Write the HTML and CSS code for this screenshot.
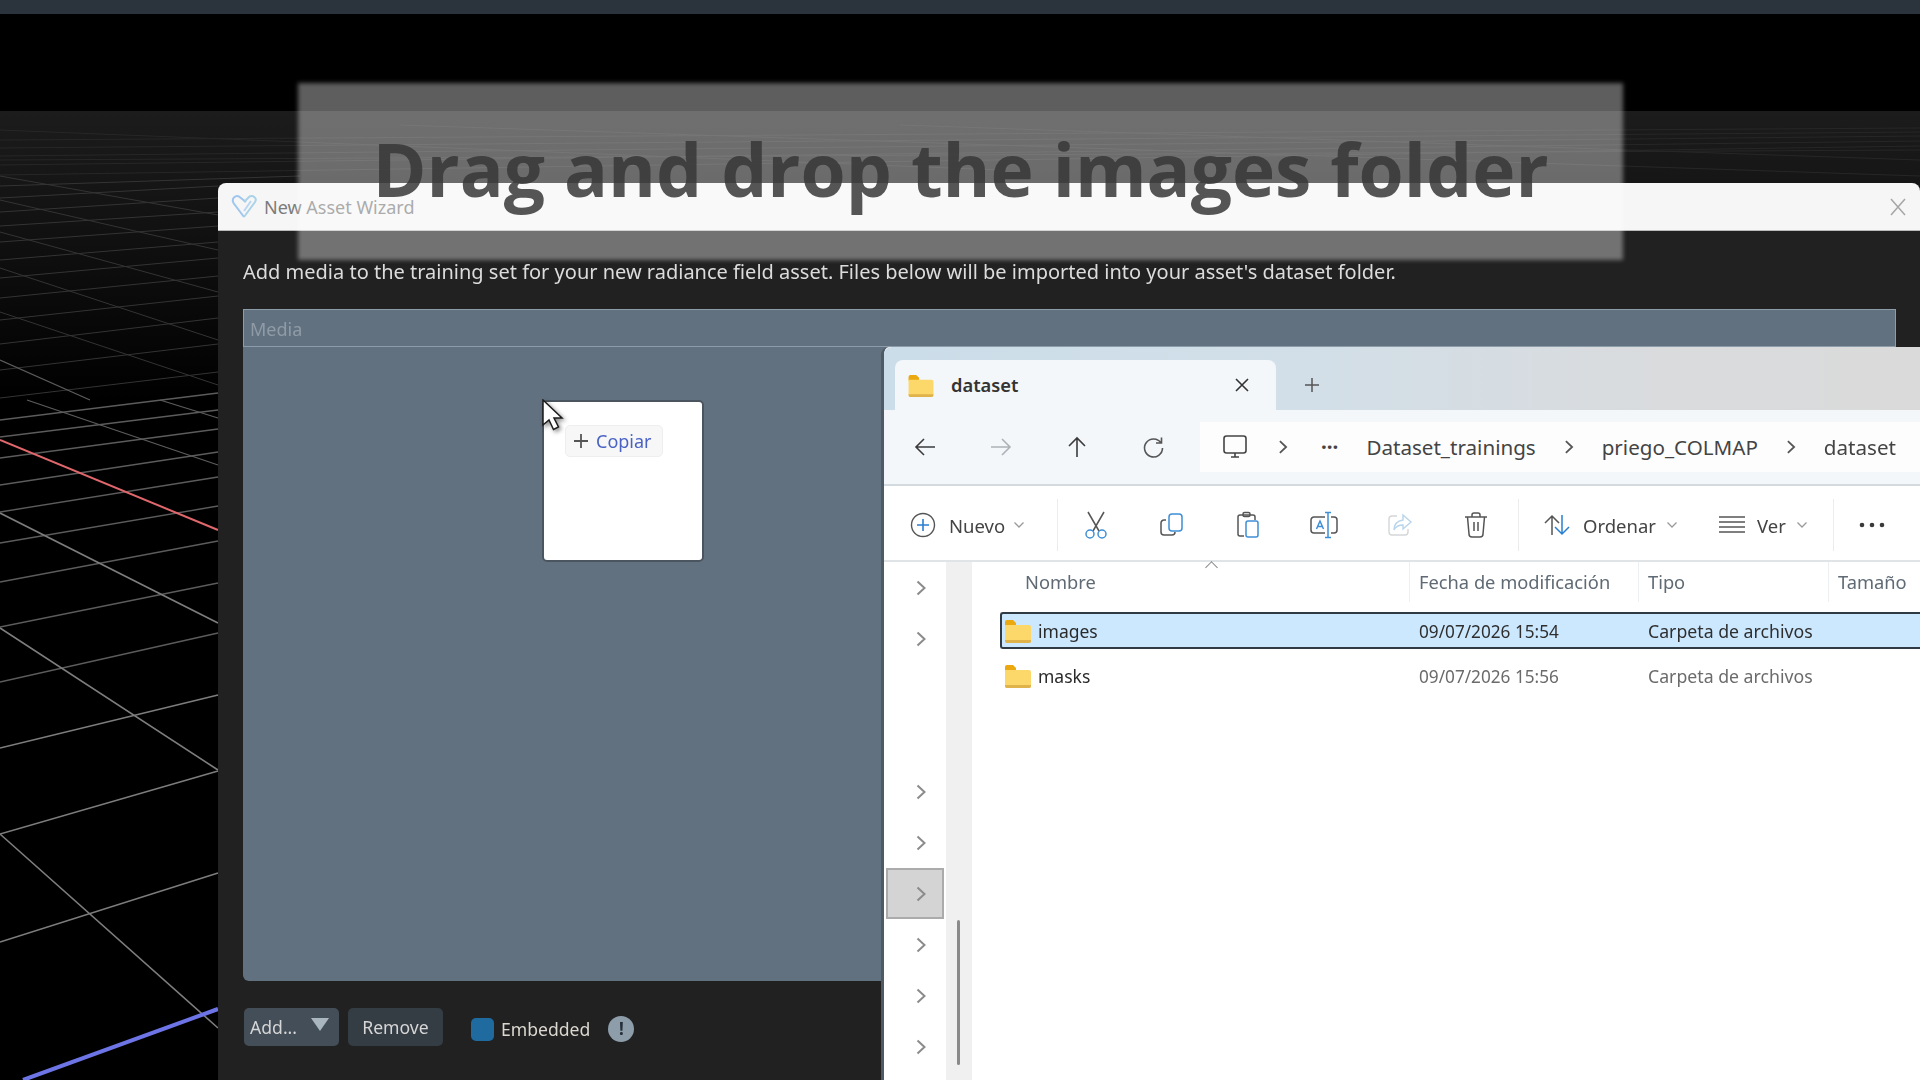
FILE: index.html
```html
<!DOCTYPE html>
<html lang="en">
<head>
  <meta charset="UTF-8">
  <title>New Asset Wizard</title>
  <link rel="stylesheet" href="styles.css">
</head>
<body>

  <svg class="icon-defs" width="0" height="0">
    <symbol id="folder" viewBox="0 0 26 24">
      <path d="M0 3a2 2 0 0 1 2-2h6l3 3v3H0z" fill="#eba80f"/>
      <path d="M0 6h24a2 2 0 0 1 2 2v14a2 2 0 0 1-2 2H2a2 2 0 0 1-2-2z" fill="#fcd76a"/>
      <path d="M0 21h26v1a2 2 0 0 1-2 2H2a2 2 0 0 1-2-2z" fill="#dfb24a"/>
    </symbol>
    <symbol id="chev" viewBox="0 0 12 18">
      <path d="M2.5 2.5 9.5 9l-7 6.5" fill="none" stroke="currentColor" stroke-width="2"/>
    </symbol>
    <symbol id="drop" viewBox="0 0 12 8">
      <path d="M1.5 1.5 6 6l4.500-4.500" fill="none" stroke="currentColor" stroke-width="1.300"/>
    </symbol>
  </svg>

  <div class="topbar"></div>

  <div class="viewport">
    <!-- floor grid -->
    <svg class="grid" width="1920" height="969" viewBox="0 111 1920 969">
      <g class="horizon">
        <path d="M0 140 1920 128M0 148 1920 132M0 156 1920 136M0 165 1920 141M0 175 1920 146"/>
        <path d="M0 160 1920 150M0 130 1000 170M400 125 1920 176M900 125 1920 160"/>
      </g>
      <g class="far">
        <path d="M0 186 300 176M0 198 218 186M0 212 218 198M0 226 218 212M0 242 218 226M0 260 218 242"/>
        <path d="M0 278 218 258M0 298 218 276M0 320 218 296M0 344 218 318M0 370 218 344M0 398 218 372"/>
        <path d="M0 176 218 215M0 200 218 250M0 232 218 292M0 268 218 340M0 312 218 385"/>
      </g>
      <g class="mid">
        <path d="M0 420 218 393M0 437 218 410M0 458 218 429M0 485 218 452M0 512 218 477"/>
        <path d="M0 543 218 506M0 582 218 541M0 627 218 583M0 682 218 633"/>
        <path d="M27 400 218 465M160 400 218 418M0 360 90 400"/>
      </g>
      <g class="near">
        <path d="M0 748 218 695M0 834 218 771M0 942 218 873"/>
        <path d="M0 513 218 623M0 628 218 770M0 834 218 1028"/>
      </g>
      <path class="axis-x" d="M0 440 218 530"/>
      <path class="axis-z" d="M23 1080 218 1009"/>
    </svg>
  </div>

  <section class="wizard">
    <header class="wizard-title">
      <svg class="wizard-logo" width="27" height="24" viewBox="0 0 27 24" fill="none" stroke-width="2">
        <path d="M13 22 2.500 8C0 3 5 0 8 1.500L15 7" stroke="#9fc6ee"/>
        <path d="M13 22 24 7C26.500 3 22 0 18.500 1.500L13 7" stroke="#a9d3e8"/>
        <path d="M13 16 20 6" stroke="#bcd6f2"/>
      </svg>
      <span class="wizard-name">New Asset Wizard</span>
      <svg class="wizard-close" width="18" height="18" viewBox="0 0 18 18"><path d="M2 1 16 17M16 1 2 17" stroke="#a6a6a6" stroke-width="1.500"/></svg>
    </header>
    <p class="wizard-desc">Add media to the training set for your new radiance field asset. Files below will be imported into your asset's dataset folder.</p>
    <div class="media">
      <div class="media-head">Media</div>
    </div>
    <footer class="wizard-foot">
      <div class="btn btn-add">Add...<span class="tri"></span></div>
      <div class="btn btn-remove">Remove</div>
      <span class="check"></span>
      <span class="check-label">Embedded</span>
      <span class="info">!</span>
    </footer>
  </section>

  <div class="drag-card">
    <div class="copy-pill">
      <svg width="16" height="16" viewBox="0 0 16 16"><path d="M8 1v14M1 8h14" stroke="#555" stroke-width="1.800"/></svg>
      <span>Copiar</span>
    </div>
  </div>

  <svg class="cursor" width="24" height="34" viewBox="0 0 24 34">
    <path d="M1 1v25l6-5 4.500 9.500 5-2.500L12 19h8z" fill="#fff" stroke="#1c1c1c" stroke-width="1.500"/>
  </svg>

  <section class="explorer">
    <div class="tabstrip">
      <div class="tab">
        <svg class="tab-folder" width="26" height="23"><use href="#folder"/></svg>
        <span class="tab-name">dataset</span>
        <svg width="16" height="16" viewBox="0 0 16 16"><path d="M2 2l12 12M14 2 2 14" stroke="#333" stroke-width="1.600"/></svg>
      </div>
      <svg class="tab-new" width="18" height="18" viewBox="0 0 18 18"><path d="M9 2v14M2 9h14" stroke="#555" stroke-width="1.500"/></svg>
    </div>

    <div class="navbar">
      <div class="nav-btn">
        <svg width="24" height="24" viewBox="0 0 24 24" fill="none" stroke="#3b3b3b" stroke-width="1.600"><path d="M22 12H3M11 4l-8 8 8 8"/></svg>
      </div>
      <div class="nav-btn">
        <svg width="24" height="24" viewBox="0 0 24 24" fill="none" stroke="#adb2b6" stroke-width="1.600"><path d="M2 12h19M13 4l8 8-8 8"/></svg>
      </div>
      <div class="nav-btn">
        <svg width="24" height="24" viewBox="0 0 24 24" fill="none" stroke="#3b3b3b" stroke-width="1.600"><path d="M12 22V3M4 11l8-8 8 8"/></svg>
      </div>
      <div class="nav-btn">
        <svg width="24" height="24" viewBox="0 0 24 24" fill="none" stroke="#555" stroke-width="1.600"><path d="M20 8a9 9 0 1 0 1.500 5M20.500 2.500V8H15"/></svg>
      </div>
      <div class="address">
        <svg class="addr-pc" width="26" height="26" viewBox="0 0 26 26" fill="none" stroke="#444" stroke-width="1.600"><rect x="2" y="2" width="22" height="17" rx="2.500"/><path d="M9 23h8M13 19v4"/></svg>
        <svg class="addr-chev addr-first" width="12" height="16"><use href="#chev"/></svg>
        <span class="addr-dots">···</span>
        <span class="crumb">Dataset_trainings</span>
        <svg class="addr-chev" width="12" height="16"><use href="#chev"/></svg>
        <span class="crumb">priego_COLMAP</span>
        <svg class="addr-chev" width="12" height="16"><use href="#chev"/></svg>
        <span class="crumb">dataset</span>
      </div>
    </div>

    <div class="toolbar">
      <div class="tb-new">
        <svg width="26" height="26" viewBox="0 0 26 26" fill="none"><circle cx="13" cy="13" r="11.500" stroke="#555" stroke-width="1.400"/><path d="M13 7v12M7 13h12" stroke="#2a7fd0" stroke-width="1.600"/></svg>
        <span>Nuevo</span>
        <svg class="tb-drop" width="12" height="8"><use href="#drop"/></svg>
      </div>
      <div class="tb-sep"></div>
      <div class="tb-btn">
        <svg width="26" height="28" viewBox="0 0 26 28" fill="none" stroke-width="1.500"><path d="M5 1l11 19M21 1 10 20" stroke="#555"/><circle cx="7" cy="23" r="4" stroke="#3f8fd6"/><circle cx="19" cy="23" r="4" stroke="#3f8fd6"/></svg>
      </div>
      <div class="tb-btn">
        <svg width="24" height="24" viewBox="0 0 24 24" fill="none" stroke-width="1.500"><path d="M6 7H4a3 3 0 0 0-3 3v9a3 3 0 0 0 3 3h8a3 3 0 0 0 3-3" stroke="#555"/><rect x="9" y="1" width="13" height="17" rx="3" stroke="#3f8fd6"/></svg>
      </div>
      <div class="tb-btn">
        <svg width="24" height="28" viewBox="0 0 24 28" fill="none" stroke-width="1.500"><path d="M8 25H4a2 2 0 0 1-2-2V6a2 2 0 0 1 2-2h13a2 2 0 0 1 2 2v3" stroke="#555"/><rect x="7" y="1.500" width="7" height="4" rx="1.500" stroke="#555"/><rect x="10" y="10" width="12" height="16" rx="2" stroke="#3f8fd6"/></svg>
      </div>
      <div class="tb-btn">
        <svg width="28" height="28" viewBox="0 0 28 28" fill="none" stroke-width="1.500"><path d="M15 6H4a3 3 0 0 0-3 3v10a3 3 0 0 0 3 3h11M21 6h3a3 3 0 0 1 3 3v10a3 3 0 0 1-3 3h-3" stroke="#555"/><path d="M6.500 18 10 10l3.500 8M7.800 15.500h4.400" stroke="#3f8fd6"/><path d="M18 2v24M15 1.500h6M15 26.500h6" stroke="#3f8fd6"/></svg>
      </div>
      <div class="tb-btn">
        <svg width="26" height="24" viewBox="0 0 26 24" fill="none" stroke-width="1.400"><path d="M10 3H5a3 3 0 0 0-3 3v13a3 3 0 0 0 3 3h13a3 3 0 0 0 3-3v-3" stroke="#d4d6d8"/><path d="M16 2l8 7-8 7v-4c-4 0-7 1-9 5 0-6 3-9 9-10z" stroke="#b9d5ec"/></svg>
      </div>
      <div class="tb-btn">
        <svg width="24" height="26" viewBox="0 0 24 26" fill="none" stroke="#555" stroke-width="1.500"><path d="M1 5h22M8 5V3a2 2 0 0 1 2-2h4a2 2 0 0 1 2 2v2M3.500 5l1.500 17a3 3 0 0 0 3 3h8a3 3 0 0 0 3-3l1.500-17M10 10v9M14 10v9"/></svg>
      </div>
      <div class="tb-sep tb-sep-wide"></div>
      <div class="tb-group tb-sort">
        <svg width="28" height="24" viewBox="0 0 28 24" fill="none" stroke-width="1.500"><path d="M9 22V3M2 10l7-7 7 7" stroke="#555"/><path d="M19 2v19M12 14l7 7 7-7" stroke="#2a7fd0"/></svg>
        <span>Ordenar</span>
        <svg class="tb-drop" width="12" height="8"><use href="#drop"/></svg>
      </div>
      <div class="tb-group tb-view">
        <svg width="26" height="18" viewBox="0 0 26 18" fill="none" stroke="#555" stroke-width="1.300"><path d="M0 1h26M0 6h26M0 11h26M0 16h26"/></svg>
        <span>Ver</span>
        <svg class="tb-drop" width="12" height="8"><use href="#drop"/></svg>
      </div>
      <div class="tb-sep"></div>
      <svg class="tb-more" width="26" height="6" viewBox="0 0 26 6" fill="#3a3a3a"><circle cx="3" cy="3" r="2.300"/><circle cx="13" cy="3" r="2.300"/><circle cx="23" cy="3" r="2.300"/></svg>
    </div>

    <div class="browser">
      <aside class="tree">
        <div class="tree-row"><svg width="12" height="18"><use href="#chev"/></svg></div>
        <div class="tree-row"><svg width="12" height="18"><use href="#chev"/></svg></div>
        <div class="tree-gap"></div>
        <div class="tree-row"><svg width="12" height="18"><use href="#chev"/></svg></div>
        <div class="tree-row"><svg width="12" height="18"><use href="#chev"/></svg></div>
        <div class="tree-row tree-hover"><svg width="12" height="18"><use href="#chev"/></svg></div>
        <div class="tree-row"><svg width="12" height="18"><use href="#chev"/></svg></div>
        <div class="tree-row"><svg width="12" height="18"><use href="#chev"/></svg></div>
        <div class="tree-row"><svg width="12" height="18"><use href="#chev"/></svg></div>
      </aside>
      <div class="tree-scroll"><div class="tree-thumb"></div></div>

      <div class="files">
        <div class="sort-caret"></div>
        <div class="file-cols file-head">
          <div class="col-name">Nombre</div>
          <div>Fecha de modificación</div>
          <div>Tipo</div>
          <div>Tamaño</div>
        </div>
        <div class="file-cols file-row selected">
          <div class="name-cell"><svg width="26" height="24"><use href="#folder"/></svg>images</div>
          <div class="cell-date">09/07/2026 15:54</div>
          <div class="cell-type">Carpeta de archivos</div>
          <div></div>
        </div>
        <div class="file-cols file-row">
          <div class="name-cell"><svg width="26" height="24"><use href="#folder"/></svg>masks</div>
          <div class="cell-date">09/07/2026 15:56</div>
          <div class="cell-type">Carpeta de archivos</div>
          <div></div>
        </div>
      </div>
    </div>
  </section>

  <div class="banner"></div>
  <h1 class="banner-text">Drag and drop the images folder</h1>

</body>
</html>
```

FILE: styles.css
```css
html, body {
  margin: 0;
  width: 1920px;
  height: 1080px;
  overflow: hidden;
  background: #000;
}
body {
  position: relative;
  font-family: "Noto Sans", sans-serif;
}
.icon-defs {
  position: absolute;
}
.topbar {
  height: 14px;
  background: #2b333c;
}
.viewport {
  position: absolute;
  left: 0;
  top: 111px;
  width: 1920px;
  height: 969px;
  background: linear-gradient(#1c1c1c, #141414 90px, #000 290px);
  filter: blur(0.6px);
}
.grid {
  display: block;
  fill: none;
}
.grid .horizon {
  stroke: #272727;
  stroke-width: 1;
}
.grid .far {
  stroke: #343434;
  stroke-width: 1;
}
.grid .mid {
  stroke: #5c5c5c;
  stroke-width: 1.3;
}
.grid .near {
  stroke: #7d7d7d;
  stroke-width: 1.6;
}
.axis-x {
  stroke: #e0686c;
  stroke-width: 2;
}
.axis-z {
  stroke: #6d74e6;
  stroke-width: 4;
}

/* wizard dialog */
.wizard {
  position: absolute;
  left: 218px;
  top: 183px;
  width: 1702px;
  height: 897px;
  display: flex;
  flex-direction: column;
  background: #212121;
  border-radius: 8px 8px 0 0;
  filter: blur(0.6px);
}
.wizard-title {
  height: 47px;
  display: flex;
  align-items: center;
  padding: 0 13px;
  background: #f6f6f6;
  border-bottom: 1px solid #bbb;
  border-radius: 8px 8px 0 0;
}
.wizard-logo {
  margin-right: 6px;
}
.wizard-name {
  flex: 1;
  font-size: 18px;
  color: #7b7b7b;
}
.wizard-desc {
  margin: 0;
  padding: 28px 25px 0;
  height: 50px;
  font-size: 20px;
  line-height: 26px;
  color: #dcdcdc;
  white-space: nowrap;
}
.media {
  height: 672px;
  margin: 0 24px 0 25px;
  background: #627180;
  border-radius: 0 0 6px 6px;
}
.media-head {
  height: 36px;
  padding-left: 6px;
  border: 1px solid #8d9ca9;
  font-size: 18px;
  line-height: 38px;
  color: #8f9ba6;
}
.wizard-foot {
  display: flex;
  align-items: center;
  padding: 27px 25px 0 26px;
  font-size: 17.6px;
  color: #d6d6d6;
}
.btn {
  height: 38px;
  display: flex;
  align-items: center;
  border-radius: 5px;
}
.btn-add {
  width: 95px;
  box-sizing: border-box;
  padding-left: 6px;
  background: #434e58;
}
.tri {
  margin-left: 14px;
  margin-top: -6px;
  border-left: 9px solid transparent;
  border-right: 9px solid transparent;
  border-top: 13px solid #a9b6c0;
}
.btn-remove {
  width: 95px;
  justify-content: center;
  margin-left: 9px;
  background: #343c44;
}
.check {
  width: 23px;
  height: 23px;
  margin: 4px 7px 0 28px;
  border-radius: 5px;
  background: #1f6a9f;
}
.check-label {
  margin-top: 4px;
  color: #dcd8d0;
}
.info {
  width: 26px;
  height: 26px;
  margin: 4px 0 0 18px;
  border-radius: 50%;
  background: #8d9daa;
  color: #26303a;
  font-size: 17px;
  font-weight: 700;
  line-height: 26px;
  text-align: center;
}

/* dragged ghost */
.drag-card {
  position: absolute;
  left: 542px;
  top: 400px;
  width: 158px;
  height: 158px;
  background: #fff;
  border: 2px solid #4a5560;
  border-radius: 5px;
  filter: blur(0.5px);
}
.copy-pill {
  position: absolute;
  left: 21px;
  top: 23px;
  width: 98px;
  height: 32px;
  box-sizing: border-box;
  display: flex;
  align-items: center;
  gap: 7px;
  padding-left: 7px;
  background: #f7f7f7;
  border: 1px solid #eeeeee;
  border-radius: 5px;
  font-size: 18px;
  color: #4a62c4;
}
.cursor {
  position: absolute;
  left: 542px;
  top: 399px;
  filter: drop-shadow(2px 2px 2px rgba(0,0,0,0.45));
}

/* file explorer */
.explorer {
  position: absolute;
  left: 881px;
  top: 347px;
  width: 1039px;
  height: 733px;
  box-sizing: border-box;
  display: flex;
  flex-direction: column;
  background: #fff;
  border-left: 3px solid #4f5a64;
  border-radius: 8px 0 0 0;
  color: #333;
  filter: blur(0.6px);
}
.tabstrip {
  height: 63px;
  flex-shrink: 0;
  display: flex;
  align-items: flex-end;
  padding-left: 11px;
  background: linear-gradient(90deg, #cbdde9, #d2dfe8 40%, #d9dbdd 75%, #dadada);
  border-radius: 8px 0 0 0;
}
.tab {
  width: 381px;
  height: 50px;
  box-sizing: border-box;
  display: flex;
  align-items: center;
  padding: 0 26px 0 13px;
  background: #f3f7fa;
  border-radius: 8px 8px 0 0;
}
.tab-folder {
  margin-right: 17px;
}
.tab-name {
  flex: 1;
  margin-top: -2px;
  font-size: 18.3px;
  font-weight: 600;
  color: #333;
}
.tab-new {
  align-self: center;
  margin: 13px 0 0 27px;
}
.navbar {
  height: 76px;
  flex-shrink: 0;
  box-sizing: border-box;
  display: flex;
  align-items: center;
  padding-left: 3px;
  background: #f3f7fa;
  border-bottom: 2px solid #d3dbe1;
}
.nav-btn {
  width: 76px;
  display: flex;
  justify-content: center;
}
.address {
  flex: 1;
  height: 50px;
  display: flex;
  align-items: center;
  margin-left: 9px;
  padding-left: 22px;
  background: #fdfdfe;
  font-size: 20.6px;
  color: #444;
  white-space: nowrap;
}
.addr-chev {
  margin: 0 27px;
  color: #555;
}
.addr-first {
  margin: 0 32px 0 29px;
}
.addr-dots {
  margin-right: 28px;
  font-weight: 700;
  line-height: 1;
}
.toolbar {
  height: 76px;
  flex-shrink: 0;
  box-sizing: border-box;
  display: flex;
  align-items: center;
  padding-top: 4px;
  background: #fff;
  border-bottom: 2px solid #e1e4e6;
  font-size: 18.5px;
  color: #444;
}
.tb-new {
  width: 173px;
  flex-shrink: 0;
  box-sizing: border-box;
  display: flex;
  align-items: center;
  padding-left: 26px;
}
.tb-new span {
  margin: 0 8px 0 13px;
}
.tb-drop {
  color: #9a9a9a;
}
.tb-sep {
  width: 1px;
  height: 52px;
  background: #ececec;
}
.tb-sep-wide {
  margin-left: 4px;
}
.tb-btn {
  width: 76px;
  display: flex;
  justify-content: center;
}
.tb-group {
  display: flex;
  align-items: center;
}
.tb-group span {
  margin: 0 10px 0 12px;
}
.tb-sort {
  padding-left: 24px;
  width: 177px;
  box-sizing: border-box;
}
.tb-view {
  width: 137px;
  box-sizing: border-box;
  padding-left: 23px;
}
.tb-more {
  margin-left: 25px;
}
.browser {
  flex: 1;
  display: flex;
  min-height: 0;
}
.tree {
  width: 62px;
  flex-shrink: 0;
}
.tree-row {
  height: 51px;
  display: flex;
  align-items: center;
  padding-left: 29px;
  margin-left: 2px;
  box-sizing: border-box;
  color: #8b8b8b;
}
.tree-gap {
  height: 102px;
}
.tree-hover {
  width: 58px;
  background: #d4d4d4;
  border: 2px solid #ababab;
  padding-left: 27px;
}
.tree-scroll {
  width: 26px;
  flex-shrink: 0;
  position: relative;
  background: #f0f0f0;
}
.tree-thumb {
  position: absolute;
  left: 11px;
  top: 358px;
  width: 3px;
  height: 145px;
  background: #8a8a8a;
  border-radius: 2px;
}
.files {
  flex: 1;
  position: relative;
  padding-left: 28px;
  font-size: 17.5px;
  color: #6b6b6b;
}
.sort-caret {
  position: absolute;
  left: 235px;
  top: 1px;
  width: 8px;
  height: 8px;
  border-left: 1.500px solid #888;
  border-top: 1.500px solid #888;
  transform: rotate(45deg);
}
.file-cols {
  display: grid;
  grid-template-columns: 409px 229px 190px 1fr;
  white-space: nowrap;
}
.file-head {
  height: 40px;
  margin-bottom: 10px;
  font-size: 18.3px;
  line-height: 40px;
  color: #5f6a74;
}
.file-head > div {
  padding-left: 9px;
  border-left: 1px solid #edf0f2;
}
.file-head .col-name {
  padding-left: 25px;
  border-left: 0;
}
.file-row {
  height: 37px;
  margin-bottom: 8px;
  box-sizing: border-box;
  align-items: center;
}
.file-row > div {
  padding-left: 10px;
}
.file-row .cell-date {
  padding-top: 1px;
  font-size: 17.2px;
}
.file-row .cell-type {
  font-size: 17.7px;
}
.file-row .name-cell {
  display: flex;
  align-items: center;
  gap: 7px;
  padding-left: 5px;
  color: #2a2a2a;
}
.selected {
  grid-template-columns: 407px 229px 190px 1fr;
  background: #cce8ff;
  border: 2px solid #2f3a44;
  border-right: 0;
  border-radius: 3px 0 0 3px;
  color: #2f2f2f;
}
.selected .name-cell {
  padding-left: 3px;
}

/* title banner on top of everything */
.banner {
  position: absolute;
  left: 298px;
  top: 83px;
  width: 1325px;
  height: 177px;
  background: rgba(255,255,255,0.37);
  filter: blur(2px);
}
.banner-text {
  position: absolute;
  left: 298px;
  top: 83px;
  width: 1325px;
  margin: 0;
  text-align: center;
  font-family: "Open Sans", sans-serif;
  font-size: 73px;
  font-weight: 700;
  line-height: 172px;
  color: rgba(55,55,55,0.85);
  white-space: nowrap;
}
```
